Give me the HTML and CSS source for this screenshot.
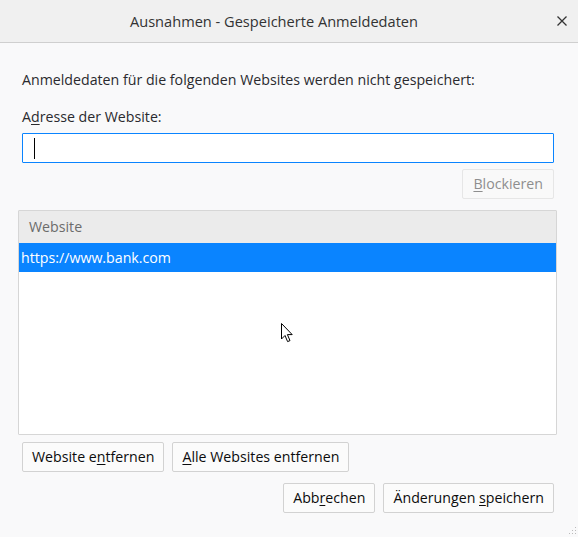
FILE: index.html
```html
<!DOCTYPE html>
<html lang="de">
<head>
<meta charset="utf-8">
<title>Ausnahmen - Gespeicherte Anmeldedaten</title>
<link rel="stylesheet" href="styles.css">
</head>
<body>
<div class="window">
  <div class="titlebar">
    <span></span>
    <span class="title">Ausnahmen - Gespeicherte Anmeldedaten</span>
    <span class="close">
      <svg width="12" height="12" viewBox="0 0 12 12"><path d="M1.5 1.5 L10.5 10.5 M10.5 1.5 L1.5 10.5" stroke="#333" stroke-width="1.3" fill="none"/></svg>
    </span>
  </div>
  <div class="content">
    <p class="desc">Anmeldedaten für die folgenden Websites werden nicht gespeichert:</p>
    <p class="label">A<u>d</u>resse der Website:</p>
    <div class="input"><span class="caret"></span></div>
    <div class="row-end">
      <button class="btn disabled"><u>B</u>lockieren</button>
    </div>
    <div class="tree">
      <div class="tree-head">Website</div>
      <div class="tree-row selected">https://www.bank.com</div>
    </div>
    <div class="row-start">
      <button class="btn">Website e<u>n</u>tfernen</button>
      <button class="btn"><u>A</u>lle Websites entfernen</button>
    </div>
    <div class="row-end bottom">
      <button class="btn">Abb<u>r</u>echen</button>
      <button class="btn">Änderungen <u>s</u>peichern</button>
    </div>
  </div>
  <svg class="cursor" width="14" height="22" viewBox="0 0 14 22">
    <path d="M0.5 0.5 L0.5 16 L4 12.5 L6.6 18.6 L9 17.6 L6.4 11.6 L11.2 11.6 Z" fill="#fff" stroke="#000" stroke-width="1"/>
  </svg>
  <svg class="grip" width="8" height="8" viewBox="0 0 8 8">
    <rect x="6" y="0" width="1" height="1" fill="#bbb"/>
    <rect x="3" y="3" width="1" height="1" fill="#bbb"/>
    <rect x="6" y="3" width="1" height="1" fill="#bbb"/>
    <rect x="0" y="6" width="1" height="1" fill="#bbb"/>
    <rect x="3" y="6" width="1" height="1" fill="#bbb"/>
    <rect x="6" y="6" width="1" height="1" fill="#bbb"/>
  </svg>
</div>
</body>
</html>
```
FILE: styles.css
```css
html, body {
  margin: 0;
  padding: 0;
  background: #f9f9fa;
}
body {
  font-family: "Open Sans", "Noto Sans", sans-serif;
  font-size: 14.2px;
  color: #2a2a2e;
}
.window {
  position: relative;
  width: 578px;
  height: 537px;
  overflow: hidden;
}
.titlebar {
  height: 42px;
  background: #f0f0f0;
  border-bottom: 1px solid #cfcfcf;
  display: grid;
  grid-template-columns: 1fr auto 1fr;
  align-items: center;
}
.title {
  font-size: 14.6px;
  color: #333;
  padding-right: 30px;
}
.close {
  justify-self: end;
  width: 30px;
  height: 30px;
  display: flex;
  align-items: center;
  justify-content: center;
  margin-right: 1px;
}
.content {
  padding: 26px 20px 0 18px;
  display: flex;
  flex-direction: column;
}
.desc, .label {
  margin: 0 4px;
  line-height: 20px;
}
.desc {
  margin-top: 1px;
}
.label {
  margin-top: 17px;
}
u {
  text-decoration: underline;
  text-underline-offset: 2px;
}
.input {
  margin: 6px 4px 0;
  height: 28px;
  background: #fff;
  border: 1px solid #0a84ff;
  border-radius: 1px;
  display: flex;
  align-items: center;
  padding-left: 11px;
}
.caret {
  width: 1px;
  height: 21px;
  background: #000;
}
.row-end {
  display: flex;
  justify-content: flex-end;
  gap: 8px;
  margin: 6px 4px 0;
}
.row-start {
  display: flex;
  gap: 8px;
  margin: 7px 4px 0;
}
.bottom {
  margin-top: 11px;
}
.btn {
  font-family: inherit;
  font-size: 14.2px;
  color: #0c0c0d;
  background: #fbfbfb;
  border: 1px solid #d2d2d2;
  border-radius: 2px;
  height: 30px;
  padding: 0 9px;
  line-height: 20px;
}
.btn.disabled {
  color: #8e8e8e;
  border-color: #e6e6e6;
  background: #f9f9f9;
  padding: 0 10px;
}
.tree {
  margin-top: 11px;
  height: 223px;
  margin-right: 1px;
  background: #fff;
  border: 1px solid #d6d6d6;
  border-radius: 1px;
}
.tree-head {
  height: 32px;
  background: #ebebeb;
  color: #6b6b6b;
  line-height: 32px;
  padding-left: 10px;
}
.tree-row {
  height: 29px;
  line-height: 29px;
  padding-left: 2px;
}
.tree-row.selected {
  background: #0a84ff;
  color: #fff;
}
.cursor {
  position: absolute;
  left: 281px;
  top: 323px;
}
.grip {
  position: absolute;
  right: 1px;
  bottom: 2px;
}
```
